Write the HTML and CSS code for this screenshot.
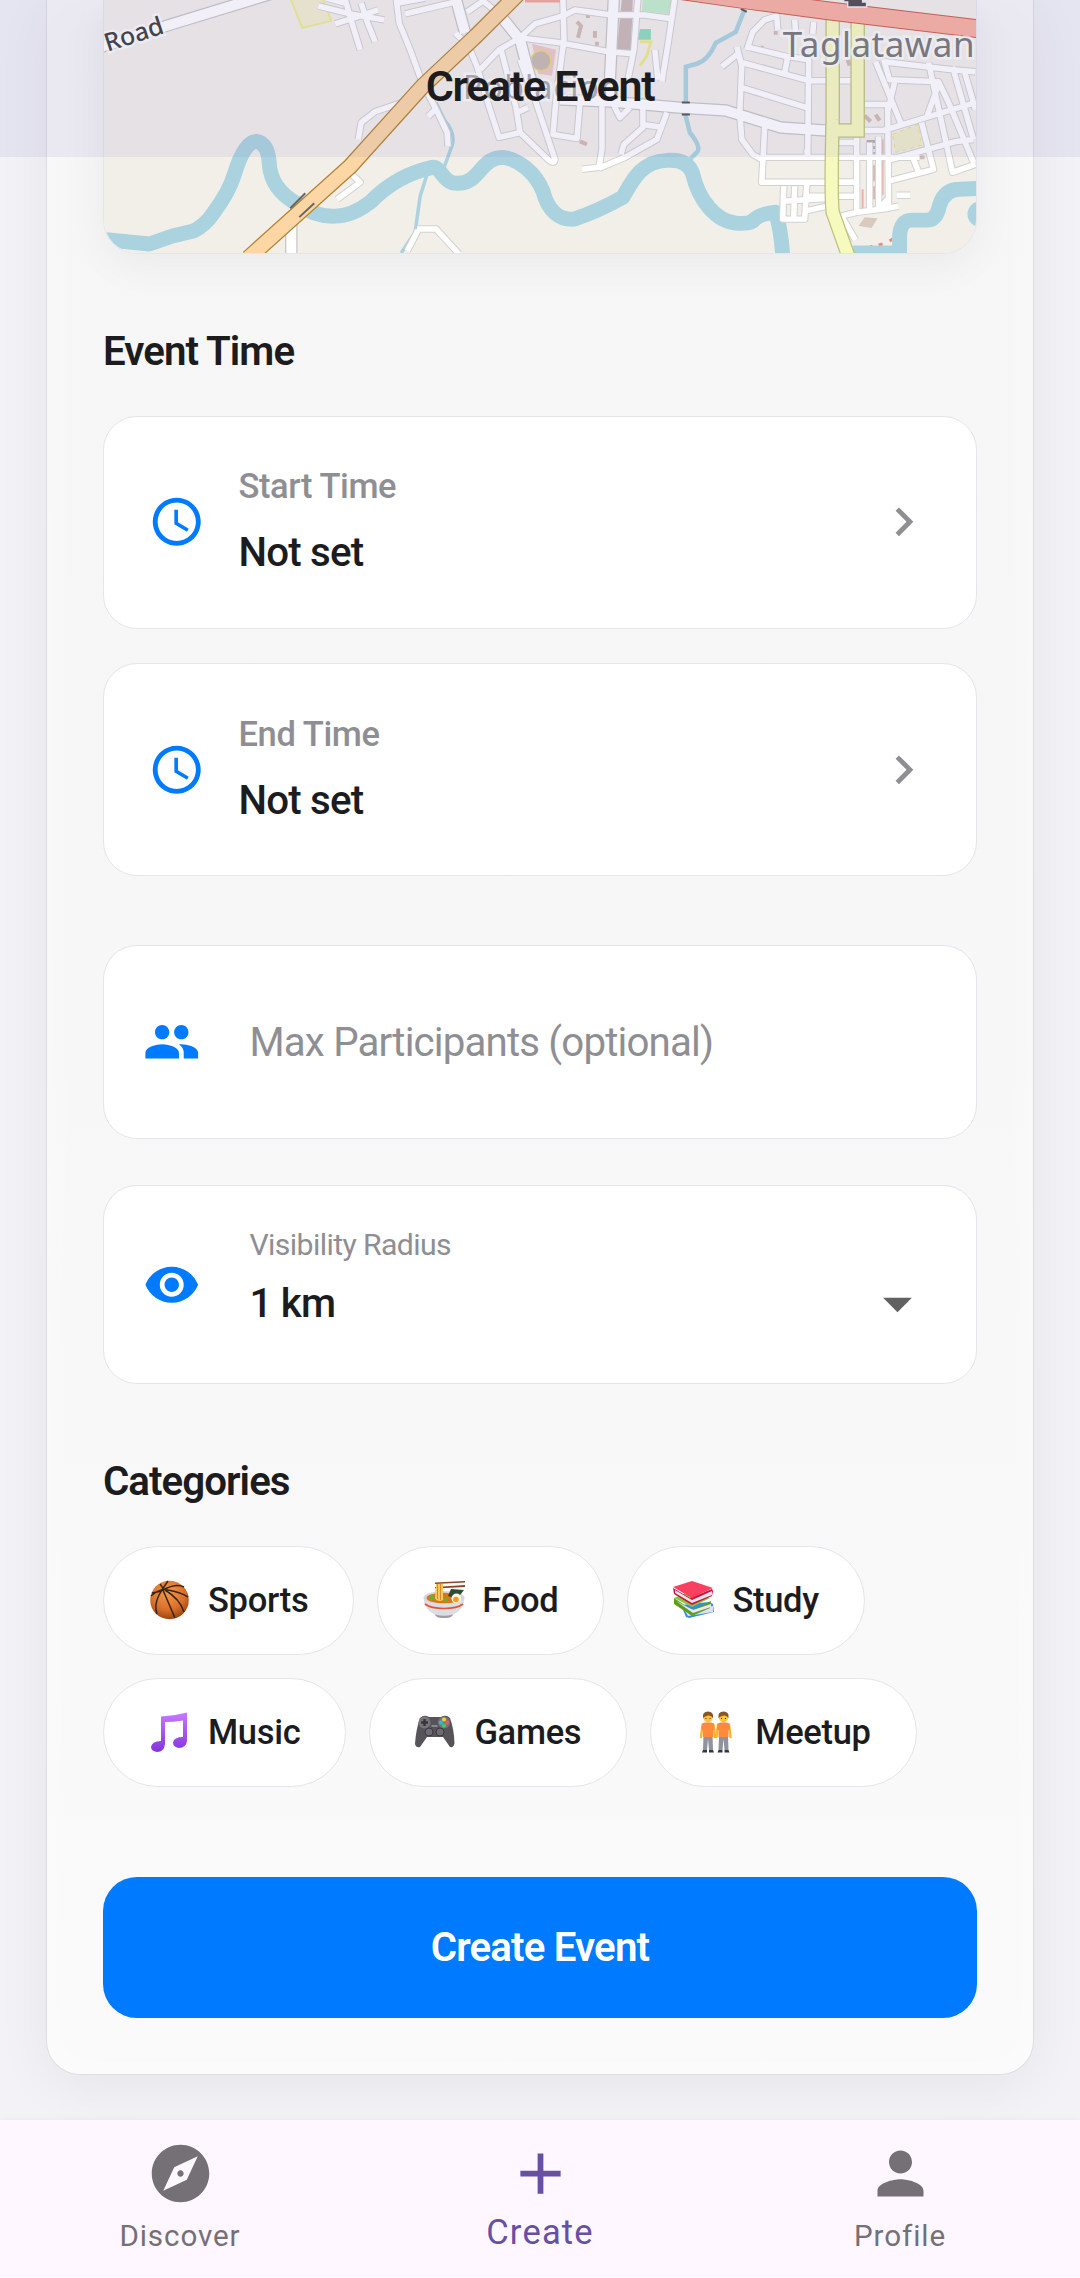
FILE: index.html
```html
<!DOCTYPE html>
<html lang="en">
<head>
<meta charset="UTF-8" />
<meta name="viewport" content="width=device-width, initial-scale=1" />
<title>Create Event</title>
<link rel="stylesheet" href="styles.css">
</head>
<body>
<header class="app-bar"><h1>Create Event</h1></header>

<main class="content">
  <form class="card">
    <div class="map">
      <svg viewBox="103.5 0 873 254" preserveAspectRatio="none" aria-label="Location map">
        <defs>
          <!-- local streets, drawn twice: casing and fill -->
          <g id="streets" fill="none" stroke-linejoin="round">
            <path d="M396 -2L399 23L410 50L422 83L437 112L447 133L448 147"/>
            <path d="M428 117L437 108M358 140L361 123L375 112L399 104L412 100"/>
            <path d="M344 -4L352 24L360 50M361 3L367 22L375 42M318 6L350 14L384 20M335 24L360 16L378 10M326 -2L345 3M405 14L430 8L455 2M398 3L425 -2"/>
            <path d="M455 33L468 45L477 67L489 107L499 138L520 133L547 159Q554 166 555 160L545 130L535 100L520 60M467 12L483 1L499 14M520 38L499 50L480 70M501 50L510 85L516 108L520 133M517 113L528 108"/>
            <path d="M520 38L535 24L563 16L575 10L612 15L645 15L674 19M563 0L564 40L556 100L553 135L577 139L580 103M520 38L560 43L609 52L633 54"/>
            <path d="M638 -2L634 50L628 80M675 -2L668 45L662 82M655 50L658 80"/>
            <path d="M602 100L602 150L599 168L582 170M599 169L625 158L657 140L667 113M643 103L643 128L624 145L621 155M643 125L664 128M614 106L620 118L630 108"/>
            <path d="M737 47L742 66L740 113L742 140L753 155L762 160M722 67L738 54M747 50L753 32L765 20L777 16L778 30M747 47L788 57L785 73M743 63L809 81L833 81M742 88L807 108M790 57L809 60L808 158M795 20L796 34M814 22L813 34"/>
            <path d="M765 127L762 183L857 183M762 158L857 158M807 150L808 158"/>
            <path d="M840 81L857 81M865 105L888 105M865 131L888 131M836 143L859 143M836 158L920 158M836 183L857 183M857 138L857 215M870 143L870 213M879 137L879 210L888 200"/>
            <path d="M876 62L901 123M884 60L890 80L939 82L950 105L974 163M888 105L889 210M884 131L976 103M929 63L953 173L976 165M953 67L974 140M884 62L953 70L976 72M895 83L888 112M888 161L957 142L974 140M888 182L934 170L922 123M912 155L920 175M965 72L976 110M939 85L927 118"/>
            <path d="M784 187L783 220L805 220L807 185M783 202L830 199M795 187L794 220M807 197L857 197M805 212L828 207M841 217L858 213L889 209L899 207M843 219L856 241M897 196L911 196"/>
            <path d="M348 172L360 183L337 200M417 230L436 230L459 255M418 231L407 252"/>
          </g>
          <!-- wider connecting roads -->
          <g id="roads" fill="none" stroke-linejoin="round">
            <path d="M98 48L172 24L280 -9"/>
            <path d="M455 -4L465 33M499 14L520 40L527 67L534 90"/>
            <path d="M614 -4L611 60L609 100"/>
            <path d="M560 100L610 102L678 108L726 111L781 128L826 131"/>
            <path d="M291 222L291 256"/>
          </g>
          <g id="river" fill="none" stroke-linejoin="round">
            <path d="M100 240L149 245L172 237L193 232Q205 226 213 214Q229 192 234 175Q244 142 256 142Q268 144 269 165Q271 190 296 204Q315 218 335 217Q352 217 370 203Q396 176 432 168C442 167 442 185 458 184C480 184 480 158 503 158C520 160 536 175 543 192C548 212 560 221 574 220Q598 212 623 198C633 180 642 162 667 161Q688 159 693 175C699 201 716 222 736 224Q748 225 753 222Q758 215 776 213Q781 230 783 256"/>
            <path d="M853 254L900 254L900 237Q901 221 912 221L927 221Q937 221 940 206Q945 190 960 190L980 189"/>
          </g>
        </defs>

        <rect x="100" y="-5" width="880" height="265" fill="#f2efe9"/>

        <!-- land use and buildings -->
        <path d="M290 -2L302 28L331 21L322 -2Z" fill="#f2efd0" stroke="#efec8c" stroke-width="2"/>
        <path d="M532 44L556 50L552 76L538 74Z" fill="#efc8c8"/>
        <circle cx="541" cy="61" r="10" fill="#c8b8b2" stroke="#e6d77c" stroke-width="1.5"/>
        <path d="M622 -2H633L631 52L617 50Z" fill="#cabab6"/>
        <path d="M643 -2H672L669 14L642 11Z" fill="#c2efcb"/>
        <path d="M640 29H651V40H638Z" fill="#8fdcbc"/>
        <path d="M640 42L651 42L647 56L640 66" fill="none" stroke="#efeb87" stroke-width="3"/>
        <path d="M893 135L918 125L922 146L896 153Z" fill="#f0edca" stroke="#ece27c" stroke-dasharray="4 4"/>
        <path d="M867 166H879V182H867ZM867 187H880V200H867Z" fill="#dfb3a8"/>
        <path d="M867 142H878M867 148H878M867 154H878M867 160H878" stroke="#b8acad" stroke-width="3"/>
        <path d="M865 218L878 219L872 229L859 227Z" fill="#d8cabe"/>
        <path d="M577 22L581 26L578 38M595 31V38M588 13V18M597 42V46M774 33H778M761 48H764M848 60L850 66M876 115L880 121M580 142L587 145M865 116L871 122M915 158L925 158" stroke="#d2bcb2" stroke-width="4" fill="none"/>
        <path d="M398 8V16M410 12V15M858 251L863 250M868 249L873 247M879 246L883 245M890 242L893 240" stroke="#e88b7d" stroke-width="3"/>
        <path d="M883 140V196M863 190V210" stroke="#e7b4aa" stroke-width="2"/>

        <!-- water -->
        <g stroke="#aad3df" fill="none">
          <use href="#river" stroke-width="15"/>
          <path d="M745 9L736 32L716 43Q708 61 697 64L686 67V117L690 133Q702 148 697 153L690 160" stroke-width="4.5"/>
          <path d="M436 103L444 120Q456 134 452 146L444 168M427 175L420 197L415 233L401 254" stroke-width="3.5"/>
          <circle cx="981" cy="215" r="13" fill="#aad3df" stroke="none"/>
        </g>

        <!-- streets -->
        <use href="#streets" stroke="#d3d1d0" stroke-width="7.5"/>
        <use href="#roads" stroke="#c8c6c6" stroke-width="12.5"/>
        <use href="#streets" stroke="#fff" stroke-width="5.5"/>
        <use href="#roads" stroke="#fff" stroke-width="10"/>
        <path d="M682 103H690M682 115H690M741 9L747 12" stroke="#555" stroke-width="2"/>

        <!-- highways -->
        <g fill="none">
          <path d="M833 18V120M833 120Q831 195 833 213L849 258M858 18V131H833" stroke="#bcc27a" stroke-width="14.5"/>
          <path d="M833 18V120M833 120Q831 195 833 213L849 258M858 18V131H833" stroke="#f7fabf" stroke-width="12"/>
          <path d="M248 259L350 167L423 86L476 36L518 -6" stroke="#b18434" stroke-width="16.5"/>
          <path d="M248 259L350 167L423 86L476 36L518 -6" stroke="#fcd6a4" stroke-width="14"/>
          <path d="M290 209L305 194M299 218L314 204" stroke="#666" stroke-width="2"/>
          <path d="M650 -14L747 0L829 11L980 29" stroke="#cf5b45" stroke-width="19"/>
          <path d="M650 -14L747 0L829 11L980 29" stroke="#f9b0a0" stroke-width="17"/>
          <path d="M525 0H560" stroke="#f2a596" stroke-width="5"/>
        </g>
        <path d="M844 -2H863V2H867V7H848V2H844Z" fill="#4c4950" stroke="#eee" stroke-width="1.5"/>

        <!-- place names -->
        <text class="map-road" transform="translate(107 52) rotate(-18)">Road</text>
        <text class="map-place dim" x="463" y="99" textLength="157">Poblacion</text>
        <text class="map-place" x="783" y="57" textLength="192">Taglatawan</text>
      </svg>
    </div>

    <h2>Event Time</h2>
    <div class="times">
      <div class="field time">
        <svg class="icon" viewBox="0 0 24 24"><path d="M11.99 2C6.47 2 2 6.48 2 12s4.47 10 9.99 10C17.52 22 22 17.52 22 12S17.52 2 11.99 2zM12 20c-4.42 0-8-3.58-8-8s3.58-8 8-8 8 3.58 8 8-3.58 8-8 8zm.5-13H11v6l5.25 3.15.75-1.23-4.5-2.67z"/></svg>
        <div class="time-text"><span class="time-label">Start Time</span><span class="value">Not set</span></div>
        <svg class="icon chevron" viewBox="0 0 24 24"><path d="M10 6L8.59 7.41 13.17 12l-4.58 4.59L10 18l6-6z"/></svg>
      </div>
      <div class="field time">
        <svg class="icon" viewBox="0 0 24 24"><path d="M11.99 2C6.47 2 2 6.48 2 12s4.47 10 9.99 10C17.52 22 22 17.52 22 12S17.52 2 11.99 2zM12 20c-4.42 0-8-3.58-8-8s3.58-8 8-8 8 3.58 8 8-3.58 8-8 8zm.5-13H11v6l5.25 3.15.75-1.23-4.5-2.67z"/></svg>
        <div class="time-text"><span class="time-label">End Time</span><span class="value">Not set</span></div>
        <svg class="icon chevron" viewBox="0 0 24 24"><path d="M10 6L8.59 7.41 13.17 12l-4.58 4.59L10 18l6-6z"/></svg>
      </div>
    </div>

    <div class="field participants">
      <svg class="icon" viewBox="0 0 24 24"><path d="M16 11c1.66 0 2.99-1.34 2.99-3S17.66 5 16 5c-1.66 0-3 1.34-3 3s1.34 3 3 3zm-8 0c1.66 0 2.99-1.34 2.99-3S9.66 5 8 5C6.34 5 5 6.34 5 8s1.34 3 3 3zm0 2c-2.33 0-7 1.17-7 3.5V19h14v-2.5c0-2.33-4.67-3.5-7-3.5zm8 0c-.29 0-.62.02-.97.05 1.16.84 1.97 1.97 1.97 3.45V19h6v-2.5c0-2.33-4.67-3.5-7-3.5z"/></svg>
      <span class="placeholder">Max Participants (optional)</span>
    </div>

    <div class="field radius">
      <svg class="icon" viewBox="0 0 24 24"><path d="M12 4.5C7 4.5 2.73 7.61 1 12c1.73 4.39 6 7.5 11 7.5s9.27-3.11 11-7.5c-1.73-4.39-6-7.5-11-7.5zM12 17c-2.76 0-5-2.24-5-5s2.24-5 5-5 5 2.24 5 5-2.24 5-5 5zm0-8c-1.66 0-3 1.34-3 3s1.34 3 3 3 3-1.34 3-3-1.34-3-3-3z"/></svg>
      <div class="radius-text">
        <span class="radius-label">Visibility Radius</span>
        <div class="radius-row">
          <span class="value">1 km</span>
          <svg class="arrow" viewBox="0 0 24 24"><path d="M7 10l5 5 5-5z"/></svg>
        </div>
      </div>
    </div>

    <h2>Categories</h2>
    <div class="chips">
      <div class="chip">
        <svg class="emoji" viewBox="0 0 43 43">
          <defs><radialGradient id="ball" cx=".45" cy=".3" r=".75"><stop offset="0" stop-color="#f39a4a"/><stop offset=".6" stop-color="#d9702a"/><stop offset="1" stop-color="#8f3c10"/></radialGradient></defs>
          <circle cx="21.5" cy="21" r="19.3" fill="url(#ball)"/>
          <path d="M3 17Q12 9 20 11Q32 13 40 18M12 5Q15 8 15 11Q24 32 27 39M20 2Q15 9 11 16Q6 26 9 35M15 11Q28 4 36 8M17 11Q32 20 36 33M4 14L14 12" fill="none" stroke="#3a2414" stroke-width="1.5"/>
        </svg>
        <span>Sports</span>
      </div>
      <div class="chip">
        <svg class="emoji" viewBox="0 0 43 43">
          <path d="M13 3.500L43 2v1.500L13 5zM13 8L43 6v2L13 9.500z" fill="#8a4526"/>
          <ellipse cx="22" cy="19" rx="20.500" ry="7" fill="#d5d6dc"/>
          <ellipse cx="22" cy="19" rx="17.500" ry="5.300" fill="#d9761b"/>
          <path d="M14 5h7v14q1 3-3 3t-5-3z" fill="#f6c75a"/>
          <path d="M15.500 5v15M18.500 5v16" stroke="#d18f2c" stroke-width="1"/>
          <path d="M6 18l5-2 2 4-5 1z" fill="#6fae35"/><circle cx="24" cy="21" r="2" fill="#6fae35"/>
          <path d="M29 10l13 1-7 9-9-3z" fill="#2f4a35"/>
          <ellipse cx="34.500" cy="19.500" rx="5" ry="5" fill="#fff3dc"/><circle cx="34" cy="20.500" r="2.800" fill="#f79a1d"/>
          <path d="M1.500 19Q4 25 22 25Q40 25 42.500 19Q42 31 31 35.500Q30 39 22 39Q14 39 13 35.500Q2 31 1.500 19z" fill="#dcdde3"/>
          <path d="M3 25Q9 29.500 22 29.500Q35 29.500 41 25" fill="none" stroke="#e0543a" stroke-width="1.600"/>
          <path d="M13 35.500Q22 38 31 35.500Q30 39 22 39Q14 39 13 35.500z" fill="#9a9ba3"/>
        </svg>
        <span>Food</span>
      </div>
      <div class="chip">
        <svg class="emoji" viewBox="0 0 43 43">
          <path d="M9 26l28-3 4 2 1 8-25 6-3-1z" fill="#2f8fe8"/><path d="M13 32l28-5v6l-25 4z" fill="#e4dff0"/>
          <path d="M2 19l18 12 19-9-1 7-18 8L2 25z" fill="#5c9e22"/><path d="M4 22l17 9 18-6v3l-18 6z" fill="#ece6f2"/><path d="M2 19l14-6 22 6-18 9z" fill="#8ac63d"/>
          <path d="M1 9l17 10 22-9 1 2-1 5-20 9L2 15z" fill="#c9143f"/><path d="M3 11l17 10 20-9v4l-20 8L3 14z" fill="#e9e2ee"/>
          <path d="M1 8L20 2l21 7-21 10z" fill="#fb3f5f"/>
        </svg>
        <span>Study</span>
      </div>
      <div class="chip">
        <svg class="emoji" viewBox="0 0 43 43">
          <defs><linearGradient id="note" x1="0" y1="0" x2="0" y2="1"><stop offset="0" stop-color="#c77bff"/><stop offset="1" stop-color="#8334dc"/></linearGradient></defs>
          <path d="M13 5.500Q26 5 39 1.500V30Q38 37 31 37Q25 36 25 31.500Q26 26 35 26V9.500Q26 11 17 11V33Q16 41 9 41Q3 40 3 36Q4 30 13 30z" fill="url(#note)"/>
        </svg>
        <span>Music</span>
      </div>
      <div class="chip">
        <svg class="emoji" viewBox="0 0 43 43">
          <path d="M6 7Q10 3 15 6H27Q32 3 36 7Q40 18 40.500 32Q40 37 36 36L29 26H13L6 36Q2 37 1 33Q2 18 6 7z" fill="#565459"/>
          <circle cx="10.500" cy="11.500" r="6" fill="#77757b"/><path d="M10.500 8v7M7 11.500h7" stroke="#38363b" stroke-width="2.400"/>
          <circle cx="30" cy="11.500" r="6" fill="#77757b"/>
          <circle cx="30" cy="8.500" r="2" fill="#ffd21f"/><circle cx="27" cy="11.500" r="2" fill="#2cb7f5"/><circle cx="33" cy="11.500" r="2" fill="#f2507b"/><circle cx="30" cy="14.500" r="2" fill="#3ecb6d"/>
          <circle cx="15" cy="21" r="4" fill="#6e6c72" stroke="#3a383d"/><circle cx="26" cy="21" r="4" fill="#6e6c72" stroke="#3a383d"/>
          <path d="M17.500 15h6" stroke="#8a888e" stroke-width="2"/>
        </svg>
        <span>Games</span>
      </div>
      <div class="chip">
        <svg class="emoji" viewBox="0 0 43 43">
          <defs>
            <g id="person">
              <path d="M8.500 24h9l.5 15h-4L13 28l-1 11H8z" fill="#8f939f"/>
              <path d="M8 39h4v2.500H7zM14 39h4l1 2.500h-5z" fill="#373640"/>
              <path d="M7.500 14L6 26M18.500 14l1.500 12" stroke="#fbb62c" stroke-width="2.400" stroke-linecap="round"/>
              <path d="M7 12.500Q13 10 19 12.500L19.500 19H18V26H8V19H6.500z" fill="#ff8a3c"/>
              <circle cx="13" cy="6.500" r="4.700" fill="#fcc23c"/>
              <path d="M8 7Q7 .5 13 .5T18 7Q16 4 13 4.500T8 7z" fill="#8b5328"/>
              <path d="M11 7v1M15 7v1" stroke="#4a2f1a"/>
            </g>
          </defs>
          <use href="#person"/><use href="#person" x="15.500"/>
        </svg>
        <span>Meetup</span>
      </div>
    </div>

    <button type="button" class="submit">Create Event</button>
  </form>
</main>

<nav class="bottom-nav">
  <a class="nav-item">
    <svg viewBox="0 0 24 24"><path d="M12 10.900c-.61 0-1.100.49-1.100 1.100s.49 1.100 1.100 1.100c.61 0 1.100-.49 1.100-1.100s-.49-1.100-1.100-1.100zM12 2C6.480 2 2 6.480 2 12s4.480 10 10 10 10-4.480 10-10S17.520 2 12 2zm2.190 12.190L6 18l3.810-8.190L18 6l-3.810 8.190z"/></svg>
    <span>Discover</span>
  </a>
  <a class="nav-item active">
    <svg viewBox="0 0 24 24"><path d="M19 13h-6v6h-2v-6H5v-2h6V5h2v6h6v2z"/></svg>
    <span>Create</span>
  </a>
  <a class="nav-item">
    <svg viewBox="0 0 24 24"><path d="M12 12c2.210 0 4-1.790 4-4s-1.790-4-4-4-4 1.790-4 4 1.790 4 4 4zm0 2c-2.670 0-8 1.340-8 4v2h16v-2c0-2.660-5.330-4-8-4z"/></svg>
    <span>Profile</span>
  </a>
</nav>
</body>
</html>
```

FILE: styles.css
```css
* {
  box-sizing: border-box;
}
body {
  margin: 0;
  height: 2278px;
  display: flex;
  flex-direction: column;
  overflow: hidden;
  position: relative;
  background: #f2f2f7;
  color: #1c1c1e;
  font-family: Roboto, "Liberation Sans", sans-serif;
}
svg {
  display: block;
  flex: none;
}

.app-bar {
  position: absolute;
  top: 0;
  left: 0;
  right: 0;
  height: 157px;
  z-index: 2;
  background: rgba(130, 122, 195, 0.115);
}
.app-bar h1 {
  margin: 60px 0 0;
  text-align: center;
  font-size: 43px;
  line-height: 52px;
  font-weight: 600;
  letter-spacing: -1.3px;
}

.content {
  flex: 1;
  min-height: 0;
  padding: 0 46px;
}
.card {
  padding: 0 56px 56px;
  border: 1px solid #dedee0;
  border-top: none;
  border-radius: 0 0 34px 34px;
  background: linear-gradient(#f6f6f6, #f7f7f7 50%, #fafafa);
  box-shadow: 0 11px 56px rgba(0, 0, 0, 0.06), inset 0 0 40px rgba(255, 255, 255, 0.6);
}

.map {
  height: 254px;
  border: 1px solid #e5e5ea;
  border-top: none;
  border-radius: 0 0 34px 34px;
  overflow: hidden;
  box-shadow: 0 11px 40px rgba(0, 0, 0, 0.05);
}
.map svg {
  width: 100%;
  height: 100%;
}
.map-road,
.map-place {
  font-family: "Noto Sans", sans-serif;
  paint-order: stroke;
  stroke: #fff;
  stroke-opacity: 0.7;
  stroke-width: 5px;
}
.map-road {
  font-size: 25px;
  font-weight: 500;
  fill: #3c3c3c;
}
.map-place {
  font-size: 35px;
  fill: #777;
}
.map-place.dim {
  font-size: 32px;
  fill: #aaa;
}

h2 {
  margin: 73.5px 0 40px;
  font-size: 40.25px;
  line-height: 48px;
  font-weight: 600;
  letter-spacing: -0.95px;
}

.field {
  display: flex;
  align-items: center;
  background: #fff;
  border: 1px solid #e5e5ea;
  border-radius: 34px;
}
.icon {
  width: 57.5px;
  height: 57.5px;
  fill: #007aff;
}
.icon.chevron {
  fill: #8e8e93;
}
.value {
  font-size: 40.25px;
  font-weight: 500;
  letter-spacing: -0.8px;
}

.times {
  display: flex;
  flex-direction: column;
  gap: 34.5px;
}
.time {
  height: 213px;
  padding: 0 44px;
}
.time-text {
  flex: 1;
  display: flex;
  flex-direction: column;
  gap: 21px;
  margin-left: 33px;
}
.time-label {
  font-size: 34.5px;
  line-height: 40px;
  font-weight: 500;
  letter-spacing: -0.4px;
  color: #8e8e93;
}
.time-text .value {
  line-height: 51px;
}

.participants {
  height: 194px;
  margin-top: 68.5px;
  padding: 0 39px;
}
.placeholder {
  margin-left: 49px;
  padding-top: 2px;
  font-size: 40.25px;
  line-height: 48px;
  letter-spacing: -0.84px;
  color: #8e8e93;
}

.radius {
  height: 199.5px;
  margin-top: 46px;
  padding: 0 44px 0 39px;
}
.radius-text {
  flex: 1;
  margin: 0 0 14px 49px;
}
.radius-label {
  display: block;
  font-size: 30.2px;
  line-height: 36px;
  letter-spacing: -0.6px;
  color: #8e8e93;
}
.radius-row {
  display: flex;
  align-items: center;
  justify-content: space-between;
  height: 48px;
  margin-top: 16px;
}
.arrow {
  width: 69px;
  height: 69px;
  fill: #616161;
}

.chips {
  display: flex;
  flex-wrap: wrap;
  gap: 23px;
}
.chip {
  display: flex;
  align-items: center;
  gap: 17px;
  height: 109px;
  padding: 0 45px 0 44px;
  background: #fff;
  border: 1px solid #e5e5ea;
  border-radius: 57px;
  font-size: 34.5px;
  font-weight: 500;
  letter-spacing: -0.3px;
}
.emoji {
  width: 43px;
  height: 43px;
}

.submit {
  display: block;
  width: 100%;
  height: 140.5px;
  margin-top: 90.5px;
  padding: 0;
  border: none;
  border-radius: 34px;
  background: #007aff;
  color: #fff;
  font-family: inherit;
  font-size: 40.25px;
  font-weight: 600;
  letter-spacing: -0.85px;
}

.bottom-nav {
  display: flex;
  height: 158px;
  padding-top: 19px;
  background: #fef7ff;
  position: relative;
  box-shadow: 0 0 6px rgba(0, 0, 0, 0.06);
}
.nav-item {
  flex: 1;
  display: flex;
  flex-direction: column;
  align-items: center;
  color: #757075;
  font-size: 29.6px;
  line-height: 42px;
  letter-spacing: 0.9px;
}
.nav-item svg {
  width: 69px;
  height: 69px;
  fill: currentColor;
}
.nav-item span {
  margin-top: 7px;
}
.nav-item.active {
  color: #6750a4;
  font-size: 34.5px;
  letter-spacing: 1.2px;
}
.nav-item.active span {
  margin-top: 3px;
}
```
